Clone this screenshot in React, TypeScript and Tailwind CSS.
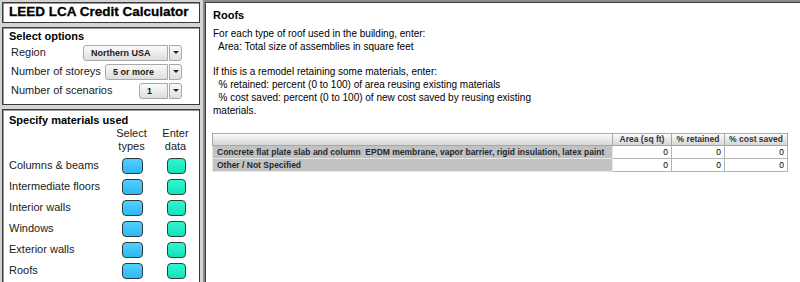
import React from "react";

const materials = [
  "Columns & beams",
  "Intermediate floors",
  "Interior walls",
  "Windows",
  "Exterior walls",
  "Roofs",
];

const rows = [
  "Concrete flat plate slab and column  EPDM membrane, vapor barrier, rigid insulation, latex paint",
  "Other / Not Specified",
];

function Dropdown({ value, width }: { value: string; width: string }) {
  return (
    <div className={`flex h-[16px] ${width} gap-[1px]`}>
      <span className="flex-1 rounded-l-[3px] border border-[#a9a9a9] bg-gradient-to-b from-[#fafafa] to-[#dedede] pl-[7px] text-[9px] font-bold leading-[14px] text-[#1a1a1a] whitespace-pre">
        {value}
      </span>
      <span className="flex w-[13px] items-center justify-center rounded-r-[3px] border border-[#a9a9a9] bg-gradient-to-b from-[#fafafa] to-[#dedede]">
        <span className="h-0 w-0 border-x-[3px] border-t-[3px] border-x-transparent border-t-[#222]" />
      </span>
    </div>
  );
}

function Panel({ className, children }: { className?: string; children: React.ReactNode }) {
  return (
    <div
      className={`border border-[#3a3a3a] bg-white shadow-[inset_1px_1px_0_#9a9a9a] ${className ?? ""}`}
    >
      {children}
    </div>
  );
}

export default function App() {
  return (
    <div className="flex h-[282px] w-[800px] overflow-hidden bg-[#d4d4d4] font-['Liberation_Sans',Arial,sans-serif] text-black">
      {/* left column */}
      <div className="flex w-[203px] shrink-0 flex-col gap-[4px] pl-[2px] pr-[3px] pt-[2px]">
        <Panel className="h-[21px] pl-[6px]">
          <h1 className="text-[13.5px] font-bold leading-[18px] [-webkit-text-stroke:0.3px_black]">
            LEED LCA Credit Calculator
          </h1>
        </Panel>

        <Panel className="h-[78px] px-[8px] pt-[1px]">
          <h2 className="text-[11px] font-bold leading-[14px] -ml-[2px]">Select options</h2>
          <div className="flex h-[19px] items-center justify-between pr-[9px] text-[11px] text-[#1a1a1a]">
            <span>Region</span>
            <Dropdown value="Northern USA" width="w-[99px]" />
          </div>
          <div className="flex h-[19px] items-center justify-between pr-[9px] text-[11px] text-[#1a1a1a]">
            <span>Number of storeys</span>
            <Dropdown value="5 or more" width="w-[77px]" />
          </div>
          <div className="flex h-[19px] items-center justify-between pr-[9px] text-[11px] text-[#1a1a1a]">
            <span>Number of scenarios</span>
            <Dropdown value="1" width="w-[43px]" />
          </div>
        </Panel>

        <Panel className="flex-1 border-b-0 pl-[6px] pt-[3px]">
          <h2 className="text-[11px] font-bold leading-[14px]">Specify materials used</h2>
          <div className="grid grid-cols-[1fr_44px_44px] text-[11px] text-[#1a1a1a]">
            <span />
            <span className="pb-[2px] pr-[3px] text-center leading-[13px]">
              Select
              <br />
              types
            </span>
            <span className="pb-[2px] pr-[3px] text-center leading-[13px]">
              Enter
              <br />
              data
            </span>
            {materials.map((m) => (
              <React.Fragment key={m}>
                <span className="flex h-[21px] items-center">{m}</span>
                <span className="flex items-center justify-center pr-[1px]">
                  <span className="h-[16px] w-[21px] rounded-[4px] border border-[#2e3a40] bg-gradient-to-b from-[#52d0ff] to-[#2bb8f2]" />
                </span>
                <span className="flex items-center justify-center pr-[2px]">
                  <span className="h-[16px] w-[19px] rounded-[4px] border border-[#2e403a] bg-gradient-to-b from-[#2ff7d0] to-[#12e2b8]" />
                </span>
              </React.Fragment>
            ))}
          </div>
        </Panel>
      </div>

      {/* right panel */}
      <div className="flex-1 border-l-2 border-t-2 border-[#8a8a8a] bg-white pl-[8px] pt-[6px] shadow-[inset_1px_1px_0_#3c3c3c]">
        <h2 className="text-[11px] font-bold leading-[14px]">Roofs</h2>
        <div className="mt-[5px] text-[10px] leading-[13px] whitespace-pre">
          <p>For each type of roof used in the building, enter:</p>
          <p>  Area: Total size of assemblies in square feet</p>
          <p className="mt-[12px]">If this is a remodel retaining some materials, enter:</p>
          <p>  % retained: percent (0 to 100) of area reusing existing materials</p>
          <p>  % cost saved: percent (0 to 100) of new cost saved by reusing existing</p>
          <p>materials.</p>
        </div>

        <div className="-ml-[1px] mt-[16px] grid w-[576px] grid-cols-[401px_59px_53px_63px] text-[8.5px] font-bold text-[#333]">
          <div className="h-[13px] border border-[#a8a8a8] bg-gradient-to-b from-[#fbfbfb] to-[#d6d6d6]" />
          <div className="h-[13px] border border-l-0 border-[#a8a8a8] bg-gradient-to-b from-[#fbfbfb] to-[#d6d6d6] text-center leading-[11px]">
            Area (sq ft)
          </div>
          <div className="h-[13px] border border-l-0 border-[#a8a8a8] bg-gradient-to-b from-[#fbfbfb] to-[#d6d6d6] text-center leading-[11px]">
            % retained
          </div>
          <div className="h-[13px] border border-l-0 border-[#a8a8a8] bg-gradient-to-b from-[#fbfbfb] to-[#d6d6d6] text-center leading-[11px]">
            % cost saved
          </div>
          {rows.map((r) => (
            <React.Fragment key={r}>
              <div className="h-[13px] whitespace-pre border border-t-0 border-[#e6e6e6] bg-[#c2c2c2] pl-[4px] leading-[12px] text-[#1e2a30]">
                {r}
              </div>
              {[0, 1, 2].map((i) => (
                <div
                  key={i}
                  className="h-[13px] border border-l-0 border-t-0 border-[#b4b4b4] bg-white pr-[3px] text-right font-normal leading-[12px] text-black"
                >
                  0
                </div>
              ))}
            </React.Fragment>
          ))}
        </div>
      </div>
    </div>
  );
}
